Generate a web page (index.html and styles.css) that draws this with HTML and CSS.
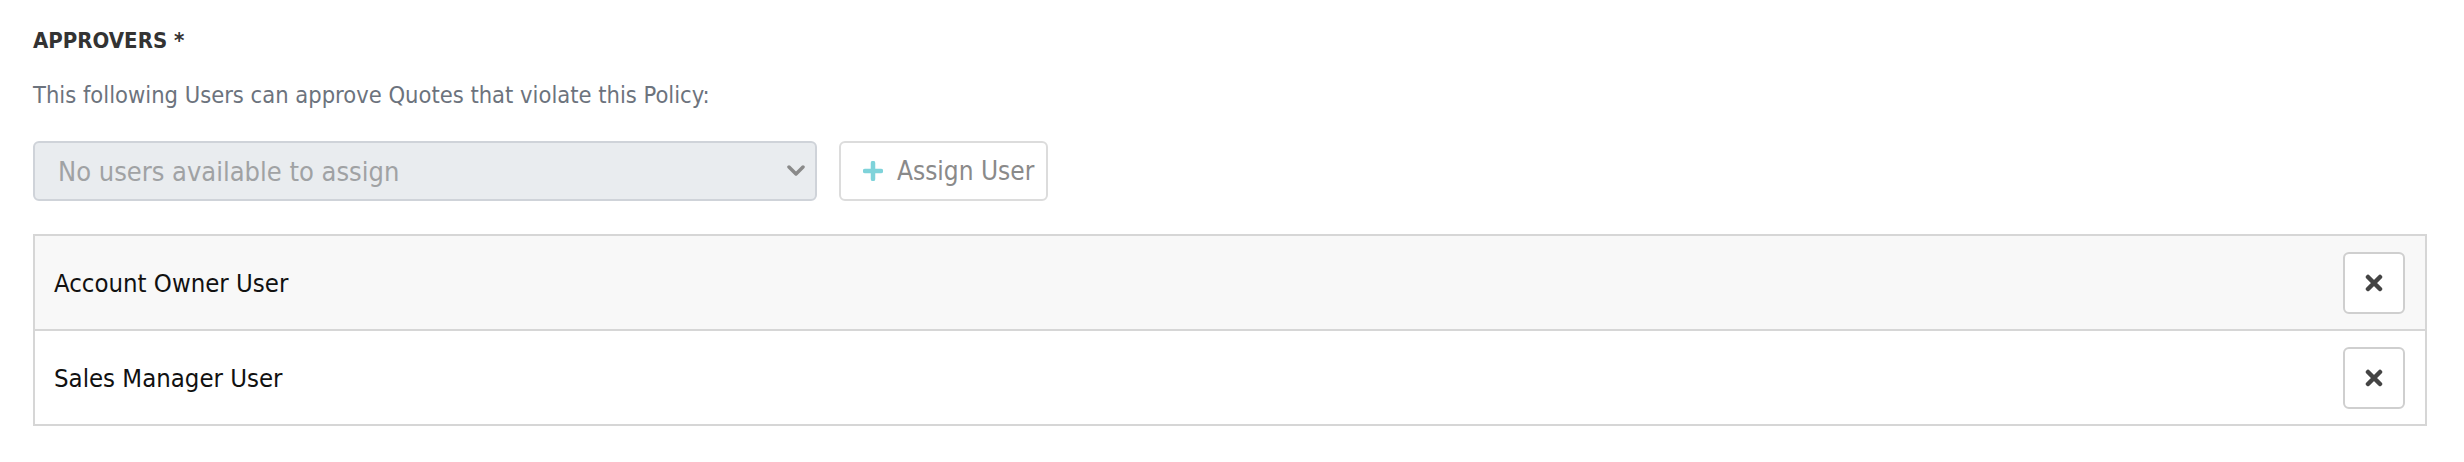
FILE: index.html
```html
<!DOCTYPE html>
<html lang="en">
<head>
    <meta charset="UTF-8">
    <title>Approvers</title>
    <link rel="stylesheet" href="styles.css">
</head>
<body>
<div class="panel">
    <h3 class="label">APPROVERS *</h3>
    <p class="hint">This following Users can approve Quotes that violate this Policy:</p>
    <div class="assign-row">
        <div class="select">
            <span>No users available to assign</span>
            <svg class="caret" width="18" height="12" viewBox="0 0 18 12">
                <path d="M2 2 L9 9 L16 2" fill="none" stroke="#8a8a8a" stroke-width="3.5" stroke-linecap="round" stroke-linejoin="round"/>
            </svg>
        </div>
        <button class="assign-btn">
            <svg width="20" height="20" viewBox="0 0 20 20">
                <path d="M10 2 V18 M2 10 H18" stroke="#7fd3da" stroke-width="4.5" stroke-linecap="round"/>
            </svg>
            Assign User
        </button>
    </div>
    <div class="users">
        <div class="user">
            <span>Account Owner User</span>
            <button class="remove">
                <svg width="18" height="18" viewBox="0 0 18 18">
                    <path d="M3 3 L15 15 M15 3 L3 15" stroke="#444" stroke-width="4.5" stroke-linecap="round"/>
                </svg>
            </button>
        </div>
        <div class="user">
            <span>Sales Manager User</span>
            <button class="remove">
                <svg width="18" height="18" viewBox="0 0 18 18">
                    <path d="M3 3 L15 15 M15 3 L3 15" stroke="#444" stroke-width="4.5" stroke-linecap="round"/>
                </svg>
            </button>
        </div>
    </div>
</div>
</body>
</html>
```

FILE: styles.css
```css
body {
    margin: 0;
    background: #fff;
    font-family: "DejaVu Sans Condensed", "DejaVu Sans", sans-serif;
    font-stretch: condensed;
    color: #222;
}
.panel {
    padding: 28px 37px 0 33px;
}
.label {
    margin: 0;
    font-size: 22px;
    line-height: 26px;
    font-weight: bold;
    color: #333;
}
.hint {
    margin: 28px 0 0 0;
    font-size: 23.5px;
    line-height: 26px;
    color: #6c737d;
}
.assign-row {
    display: flex;
    gap: 22px;
    margin-top: 33px;
}
.select {
    width: 784px;
    height: 60px;
    box-sizing: border-box;
    display: flex;
    align-items: center;
    justify-content: space-between;
    padding: 0 10px 0 23px;
    background: #e9ecef;
    border: 2px solid #cfd3d9;
    border-radius: 6px;
    font-size: 27px;
    color: #a0a2a4;
}
.assign-btn {
    height: 60px;
    box-sizing: border-box;
    display: flex;
    align-items: center;
    gap: 14px;
    padding: 0 12px 0 22px;
    background: #fff;
    border: 2px solid #dcdcdc;
    border-radius: 6px;
    font-family: inherit;
    font-stretch: condensed;
    font-size: 26px;
    color: #8a8a8a;
}
.users {
    margin-top: 33px;
    border: 2px solid #d6d6d6;
}
.user {
    display: flex;
    align-items: center;
    justify-content: space-between;
    height: 93px;
    padding: 0 20px 0 19px;
    font-size: 25.5px;
    color: #111;
}
.user:first-child {
    background: #f8f8f8;
    border-bottom: 2px solid #d6d6d6;
}
.remove {
    width: 62px;
    height: 62px;
    display: flex;
    align-items: center;
    justify-content: center;
    background: #fff;
    border: 2px solid #cfcfcf;
    border-radius: 6px;
    padding: 0;
}
```
